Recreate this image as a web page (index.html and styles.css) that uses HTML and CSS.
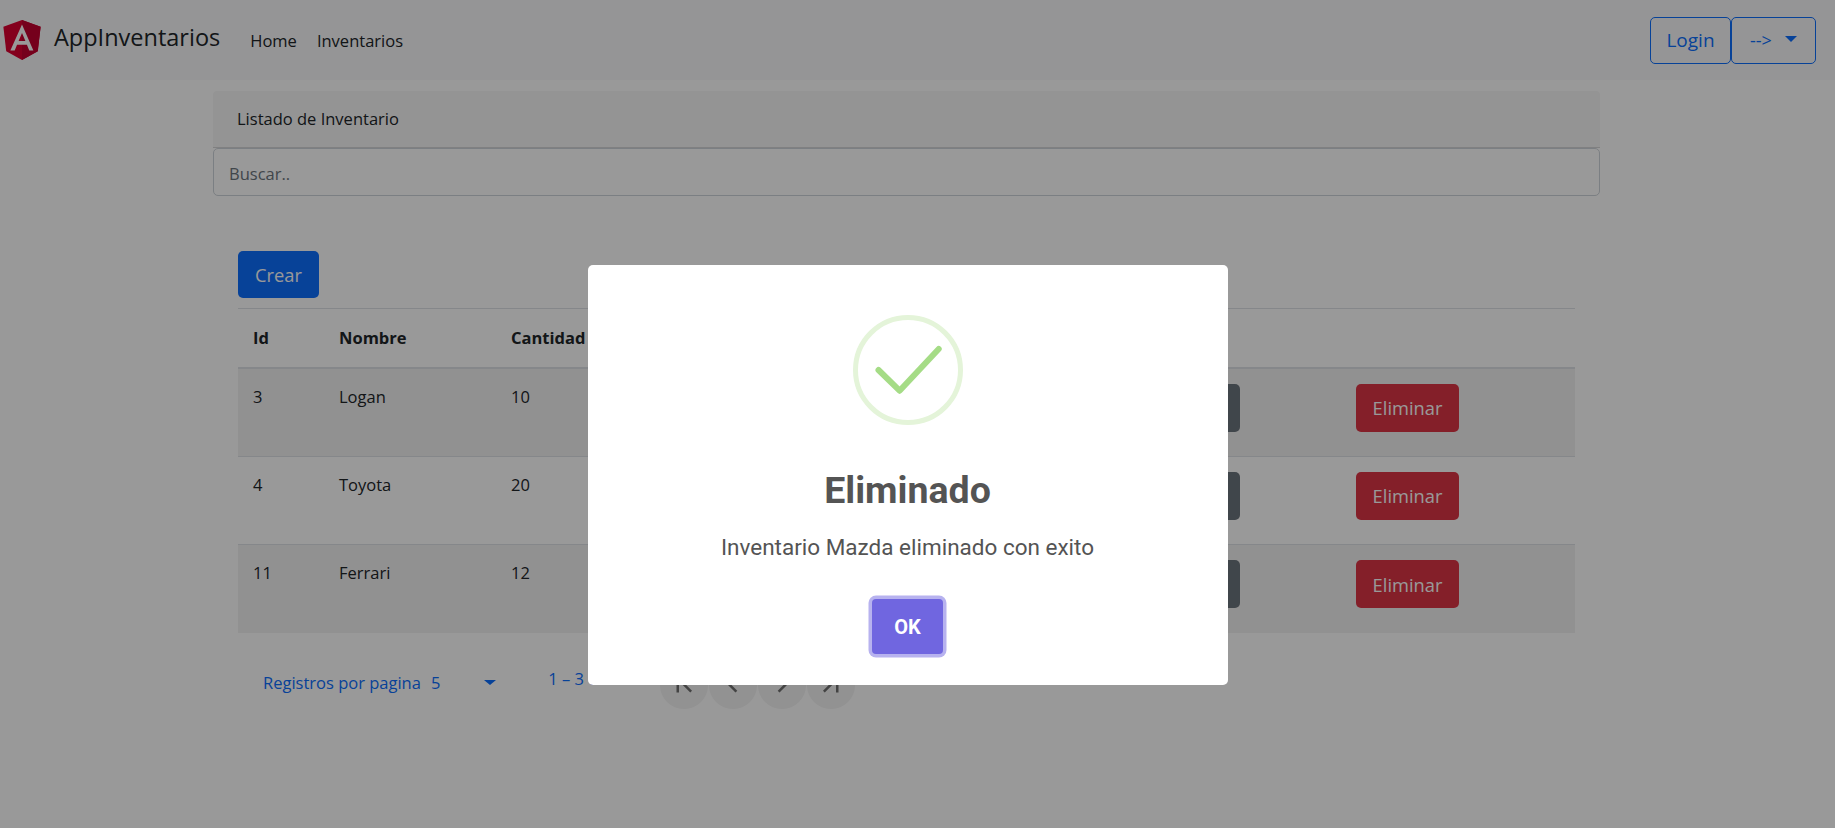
FILE: index.html
```html
<!DOCTYPE html>
<html lang="es">
<head>
  <meta charset="UTF-8" />
  <title>AppInventarios</title>
  <meta name="viewport" content="width=device-width, initial-scale=1" />
  <link rel="stylesheet" href="styles.css">
</head>
<body>
  <nav class="navbar">
    <a class="brand" href="#">
      <svg class="brand-logo" viewBox="32 30 186 200" aria-hidden="true">
        <polygon fill="#dd0031" points="125,30 31.9,63.2 46.1,186.3 125,230 203.9,186.3 218.1,63.2"/>
        <polygon fill="#c3002f" points="125,30 125,230 203.9,186.3 218.1,63.2"/>
        <path fill="#fff" d="M125,52.1L66.8,182.6h21.7l11.7-29.2h49.4l11.7,29.2H182L125,52.1z M142,135.4H108l17-40.9L142,135.4z"/>
      </svg>
      <span class="brand-name">AppInventarios</span>
    </a>
    <ul class="nav-links">
      <li><a href="#">Home</a></li>
      <li><a href="#">Inventarios</a></li>
    </ul>
    <div class="nav-actions">
      <button class="btn btn-outline btn-login">Login</button>
      <button class="btn btn-outline btn-toggle">--&gt;<span class="caret"></span></button>
    </div>
  </nav>

  <main class="content">
    <div class="card-header">Listado de Inventario</div>
    <input class="search" type="text" placeholder="Buscar.." />

    <section class="card-body">
      <button class="btn btn-primary">Crear</button>

      <table class="table">
        <thead>
          <tr>
            <th class="col-id">Id</th>
            <th class="col-name">Nombre</th>
            <th class="col-qty">Cantidad</th>
            <th class="col-extra"></th>
            <th class="col-edit"></th>
            <th class="col-del"></th>
          </tr>
        </thead>
        <tbody>
          <tr>
            <td>3</td>
            <td>Logan</td>
            <td>10</td>
            <td></td>
            <td><button class="btn btn-secondary">Editar</button></td>
            <td><button class="btn btn-danger">Eliminar</button></td>
          </tr>
          <tr>
            <td>4</td>
            <td>Toyota</td>
            <td>20</td>
            <td></td>
            <td><button class="btn btn-secondary">Editar</button></td>
            <td><button class="btn btn-danger">Eliminar</button></td>
          </tr>
          <tr>
            <td>11</td>
            <td>Ferrari</td>
            <td>12</td>
            <td></td>
            <td><button class="btn btn-secondary">Editar</button></td>
            <td><button class="btn btn-danger">Eliminar</button></td>
          </tr>
        </tbody>
      </table>

      <div class="paginator">
        <span class="page-size">Registros por pagina</span>
        <span class="page-value">5</span>
        <span class="caret page-caret"></span>
        <span class="page-range">1 – 3 of 3</span>
        <div class="page-buttons">
          <span class="page-btn">
            <svg viewBox="0 0 24 24" aria-hidden="true"><path d="M18.41 16.59L13.82 12l4.59-4.59L17 6l-6 6 6 6zM6 6h2v12H6z"/></svg>
          </span>
          <span class="page-btn">
            <svg viewBox="0 0 24 24" aria-hidden="true"><path d="M15.41 7.41L14 6l-6 6 6 6 1.41-1.41L10.83 12z"/></svg>
          </span>
          <span class="page-btn">
            <svg viewBox="0 0 24 24" aria-hidden="true"><path d="M10 6L8.59 7.41 13.17 12l-4.58 4.59L10 18l6-6z"/></svg>
          </span>
          <span class="page-btn">
            <svg viewBox="0 0 24 24" aria-hidden="true"><path d="M5.59 7.41L10.18 12l-4.59 4.59L7 18l6-6-6-6zM16 6h2v12h-2z"/></svg>
          </span>
        </div>
      </div>
    </section>
  </main>

  <div class="backdrop">
    <div class="dialog">
      <svg class="dialog-icon" viewBox="0 0 110 110" aria-hidden="true">
        <circle cx="55" cy="55" r="52.5" fill="none" stroke="#e4f4d9" stroke-width="5"/>
        <path d="M25.5 55 L46.6 75.7 L85.7 34" fill="none" stroke="#a5dc86" stroke-width="6" stroke-linecap="round" stroke-linejoin="round"/>
      </svg>
      <h2 class="dialog-title">Eliminado</h2>
      <p class="dialog-text">Inventario Mazda eliminado con exito</p>
      <button class="dialog-ok">OK</button>
    </div>
  </div>
</body>
</html>
```

FILE: styles.css
```css
* {
  box-sizing: border-box;
}
body {
  margin: 0;
  background: #fff;
  color: #212529;
  font-family: 'Open Sans', sans-serif;
  font-size: 16.5px;
}
a {
  color: inherit;
  text-decoration: none;
}

.navbar {
  display: flex;
  align-items: center;
  height: 80px;
  padding: 0 19px 0 3px;
  background: #f8f9fa;
}
.brand {
  display: flex;
  align-items: center;
  gap: 13px;
  font-size: 23.5px;
}
.brand-logo {
  width: 38px;
  height: 40px;
}
.brand-name {
  margin-bottom: 7px;
}
.nav-links {
  display: flex;
  gap: 20px;
  list-style: none;
  margin: 0 0 0 30px;
  padding: 0;
}
.nav-actions {
  display: flex;
  margin-left: auto;
}

.btn {
  display: block;
  font-family: inherit;
  font-size: 18.3px;
  padding: 0 16px;
  height: 47px;
  border-radius: 5px;
  border: 1px solid transparent;
  cursor: pointer;
}
.btn-outline {
  background: transparent;
  border-color: #0d6efd;
  color: #0d6efd;
}
.btn-login {
  width: 81px;
  padding: 0;
  font-size: 19px;
}
.btn-toggle {
  display: flex;
  align-items: center;
  gap: 13px;
  width: 85px;
  padding: 0 0 0 18px;
  font-size: 18px;
}
.caret {
  display: inline-block;
  width: 0;
  height: 0;
  margin-bottom: 3px;
  border-top: 6px solid #0d6efd;
  border-left: 6px solid transparent;
  border-right: 6px solid transparent;
}
.btn-primary {
  background: #0d6efd;
  color: #fff;
}
.btn-secondary {
  width: 100px;
  height: 48px;
  background: #6c757d;
  color: #fff;
}
.btn-danger {
  width: 103px;
  height: 48px;
  padding: 0;
  background: #dc3545;
  color: #fff;
}

.content {
  width: 1387px;
  margin: 11px 0 0 213px;
}
.card-header {
  height: 57px;
  padding: 0 24px;
  background: #f7f7f7;
  border-bottom: 1px solid #d5d6d8;
  border-radius: 4px 4px 0 0;
  line-height: 56px;
}
.search {
  display: block;
  width: 100%;
  height: 48px;
  padding: 2px 15px 0;
  border: 1px solid #ced4da;
  border-radius: 5px;
  font-family: inherit;
  font-size: 16.5px;
}
.search::placeholder {
  color: #6c757d;
}
.card-body {
  padding: 55px 25px 0;
}

.table {
  width: 100%;
  margin-top: 10px;
  border-collapse: collapse;
  table-layout: fixed;
}
.table th {
  height: 59px;
  padding: 0 15px;
  text-align: left;
  font-weight: 700;
  border-top: 1px solid #dee2e6;
  border-bottom: 2px solid #dee2e6;
}
.table td {
  height: 88.5px;
  padding: 15px;
  vertical-align: top;
  line-height: 25px;
  border-bottom: 1px solid #dee2e6;
}
.table tbody tr:nth-child(odd) {
  background: #f2f2f2;
}
.table tbody tr:last-child td {
  border-bottom: none;
}
.col-id {
  width: 86px;
}
.col-name {
  width: 172px;
}
.col-qty {
  width: 150px;
}
.col-extra {
  width: 479px;
}
.col-edit {
  width: 216px;
}

.paginator {
  display: flex;
  align-items: center;
  height: 64px;
  margin-top: 17px;
  padding-left: 25px;
  color: #0d6efd;
}
.page-value {
  margin-left: 10px;
}
.page-caret {
  margin: 0 0 0 44px;
  border-top-width: 5px;
}
.page-range {
  width: 90px;
  margin: 0 0 8px 52px;
}
.page-buttons {
  display: flex;
  gap: 1px;
  margin: 6px 0 0 22px;
}
.page-btn {
  display: flex;
  align-items: center;
  justify-content: center;
  width: 48px;
  height: 48px;
  border-radius: 50%;
  background: #f3f3f3;
}
.page-btn svg {
  width: 30px;
  height: 30px;
  fill: rgba(0, 0, 0, 0.54);
}

.backdrop {
  position: fixed;
  inset: 0;
  display: flex;
  align-items: flex-start;
  justify-content: center;
  background: rgba(0, 0, 0, 0.4);
}
.dialog {
  display: flex;
  flex-direction: column;
  align-items: center;
  width: 640px;
  height: 420px;
  margin: 265px 0 0 -20px;
  padding-top: 50px;
  background: #fff;
  border-radius: 5px;
  color: #545454;
  font-family: Roboto, sans-serif;
}
.dialog-icon {
  width: 110px;
  height: 110px;
}
.dialog-title {
  margin: 43px 0 0;
  font-size: 37.5px;
  line-height: 44px;
  font-weight: 700;
}
.dialog-text {
  margin: 20px 0 0;
  font-size: 22.5px;
  line-height: 30px;
  font-weight: 400;
}
.dialog-ok {
  width: 71px;
  height: 55px;
  margin-top: 37px;
  border: none;
  border-radius: 4px;
  background: #7066e0;
  box-shadow: 0 0 0 3.5px rgba(112, 102, 224, 0.5);
  color: #fff;
  font-family: Roboto, sans-serif;
  font-size: 20px;
  font-weight: 700;
  cursor: pointer;
}
```
